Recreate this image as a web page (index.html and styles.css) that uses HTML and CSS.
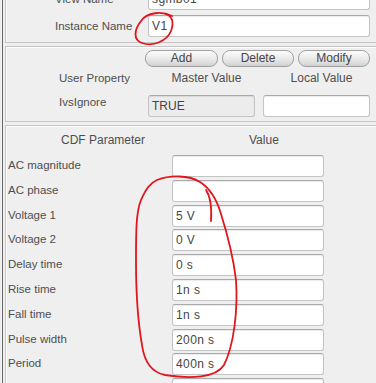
FILE: index.html
```html
<!DOCTYPE html>
<html>
<head>
<meta charset="utf-8">
<link rel="stylesheet" href="styles.css">
</head>
<body>
<div class="form">

  <div class="group group-top">
    <div class="field-row">
      <span class="label">View Name</span>
      <span class="entry">sgmb01</span>
    </div>
    <div class="field-row">
      <span class="label">Instance Name</span>
      <span class="entry">V1</span>
    </div>
  </div>

  <div class="group group-props">
    <div class="buttons">
      <span class="btn btn-add">Add</span>
      <span class="btn">Delete</span>
      <span class="btn">Modify</span>
    </div>
    <div class="props">
      <span class="label">User Property</span>
      <span class="head">Master Value</span>
      <span class="head">Local Value</span>
      <span class="label label-top">IvsIgnore</span>
      <span class="entry entry-ro">TRUE</span>
      <span class="entry"></span>
    </div>
  </div>

  <div class="group group-cdf">
    <div class="cdf-head">
      <span class="cdf-head_param">CDF Parameter</span>
      <span>Value</span>
    </div>
    <div class="cdf">
      <span class="label">AC magnitude</span><span class="entry"></span>
      <span class="label">AC phase</span><span class="entry"></span>
      <span class="label">Voltage 1</span><span class="entry">5 V</span>
      <span class="label">Voltage 2</span><span class="entry">0 V</span>
      <span class="label">Delay time</span><span class="entry">0 s</span>
      <span class="label">Rise time</span><span class="entry">1n s</span>
      <span class="label">Fall time</span><span class="entry">1n s</span>
      <span class="label">Pulse width</span><span class="entry">200n s</span>
      <span class="label">Period</span><span class="entry">400n s</span>
      <span class="label"></span><span class="entry"></span>
    </div>
  </div>

  <!-- hand drawn red marks over the dialog -->
  <svg class="marks" width="376" height="383" viewBox="0 0 376 383">
    <path d="M172,16 C162,11 147,12 141,21 C134,30 133,40 142,43 C153,47 167,41 171,31 C174,23 173,16 165,14" />
    <path d="M157,180 C170,175 189,175 200,182 C211,189 217,200 221,214 C227,233 233,255 236,280 C238,310 234,345 224,365 C216,378 190,379 165,375 C150,372 144,360 142,345 C138,322 136,295 136,262 C136,232 136,212 141,200 C146,189 150,183 157,180" />
    <path d="M206,190 C210,196 212,206 211,221" />
  </svg>
</div>
</body>
</html>
```

FILE: styles.css
```css
body {
  margin: 0;
  background-color: #efefef;
  font-family: "Liberation Sans", Arial, sans-serif;
  font-size: 11.5px;
  color: #4e4e4e;
  overflow: hidden;
  height: 383px;
}

.form {
  position: relative;
  margin-left: 2px;
  padding-left: 2px;
  border-left: 1px solid #6a6a6a;
  margin-top: -17px;
  height: 420px;
}

.group {
  width: 400px;
  margin: 0 0 3px 0;
  border: 1px solid #c6c6c6;
  box-shadow: inset 1px 1px 0 #fbfbfb;
}

/* top part: view and instance */
.group-top {
  padding: 4px 0 5px;
}
.field-row {
  display: grid;
  grid-template-columns: 93px 222px;
  align-items: center;
  height: 22px;
  padding-left: 49px;
  margin-bottom: 5px;
}
.field-row:last-child {
  margin-bottom: 0;
}

.entry {
  display: flex;
  align-items: center;
  height: 22px;
  box-sizing: border-box;
  padding-left: 3px;
  background-color: #fff;
  border: 1px solid #c4c4c4;
  border-top-color: #a9a9a9;
  border-radius: 3px;
  box-shadow: inset 0 1px 1px rgba(0, 0, 0, .08);
  font-size: 12px;
  letter-spacing: .4px;
  color: #454545;
}
.entry-ro {
  background-color: #ececec;
  letter-spacing: 0;
}

/* user properties */
.group-props {
  padding: 3px 0 4px;
}
.buttons {
  display: flex;
  gap: 4px;
  padding-left: 139px;
}
.btn {
  width: 72px;
  height: 17px;
  box-sizing: border-box;
  line-height: 15px;
  text-align: center;
  border: 1px solid #a0a0a0;
  border-radius: 8px;
  background: linear-gradient(#fdfdfd, #e8e8e8 55%, #d2d2d2);
  font-size: 12px;
  color: #454545;
}
.btn-add {
  width: 73px;
}
.props {
  display: grid;
  grid-template-columns: 81px 107px 107px;
  grid-template-rows: 18px 22px;
  column-gap: 8px;
  row-gap: 8px;
  align-items: center;
  padding-left: 53px;
  margin-top: 2px;
}
.head {
  text-align: center;
  padding-left: 10px;
  font-size: 12px;
}
.label-top {
  align-self: start;
  line-height: 14px;
}

/* cdf parameters */
.group-cdf {
  padding-top: 6px;
}
.cdf-head {
  display: flex;
  height: 16px;
  align-items: center;
  padding-left: 55px;
  margin-bottom: 7px;
  font-size: 12px;
}
.cdf-head_param {
  width: 188px;
}
.cdf {
  display: grid;
  grid-template-columns: 164px 152px;
  grid-auto-rows: 22px;
  row-gap: 2.8px;
  align-items: center;
  padding-left: 2px;
}
.cdf .label {
  margin-top: -2px;
}

.marks {
  position: absolute;
  top: 17px;
  left: -3px;
  pointer-events: none;
}
.marks path {
  fill: none;
  stroke: #e2141c;
  stroke-width: 1.8;
  stroke-linecap: round;
}
```
